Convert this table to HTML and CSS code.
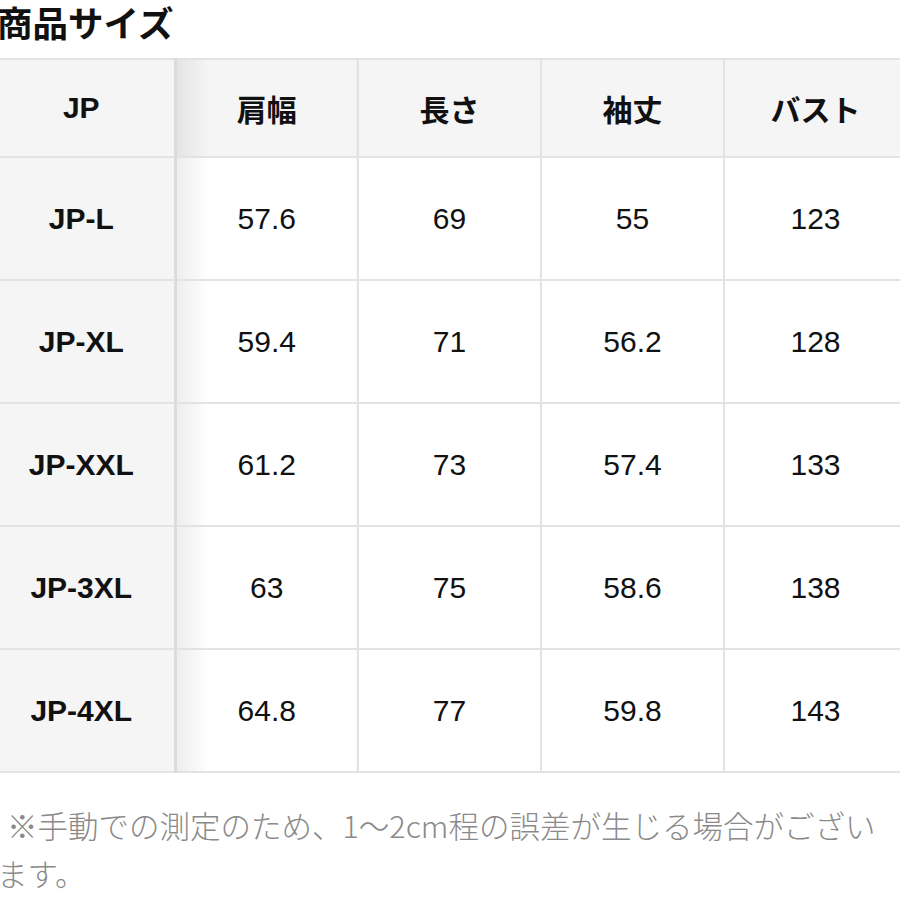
FILE: index.html
```html
<!DOCTYPE html>
<html lang="ja">
<head>
<meta charset="utf-8">
<link rel="stylesheet" href="styles.css">
</head>
<body>
<h1 class="title">商品サイズ</h1>
<table class="size-table">
  <colgroup>
    <col class="c-first"><col class="c-col"><col class="c-col"><col class="c-col"><col class="c-col">
  </colgroup>
  <thead>
    <tr><th class="first">JP</th><th class="second">肩幅</th><th>長さ</th><th>袖丈</th><th>バスト</th></tr>
  </thead>
  <tbody>
    <tr><th class="first">JP-L</th><td class="second">57.6</td><td>69</td><td>55</td><td>123</td></tr>
    <tr><th class="first">JP-XL</th><td class="second">59.4</td><td>71</td><td>56.2</td><td>128</td></tr>
    <tr><th class="first">JP-XXL</th><td class="second">61.2</td><td>73</td><td>57.4</td><td>133</td></tr>
    <tr><th class="first">JP-3XL</th><td class="second">63</td><td>75</td><td>58.6</td><td>138</td></tr>
    <tr><th class="first">JP-4XL</th><td class="second">64.8</td><td>77</td><td>59.8</td><td>143</td></tr>
  </tbody>
</table>
<p class="note">※手動での測定のため、1〜2cm程の誤差が生じる場合がございます。</p>
</body>
</html>
```
FILE: styles.css
```css
html, body {
  margin: 0;
  padding: 0;
  background: #ffffff;
  overflow: hidden;
}
body {
  width: 900px;
  height: 900px;
  font-family: "Liberation Sans", "Noto Sans CJK JP", sans-serif;
  color: #111111;
}
.title {
  margin: 0 0 0 -3px;
  font-family: "Noto Sans CJK JP", sans-serif;
  font-weight: 700;
  font-size: 35.5px;
  line-height: 44px;
  height: 44px;
  color: #111;
}
.size-table {
  margin: 14px 0 0 -11px;
  width: 915px;
  border-collapse: collapse;
  table-layout: fixed;
  border-top: 2px solid #e3e3e3;
}
.c-first { width: 186px; }
.c-col { width: 183px; }
.size-table th,
.size-table td {
  text-align: center;
  vertical-align: middle;
  padding: 0;
  border-bottom: 2px solid #e3e3e3;
  border-right: 2px solid #e3e3e3;
  font-size: 30px;
}
.size-table thead tr { height: 98px; }
.size-table tbody tr { height: 123px; }
.size-table thead th {
  background: #f5f5f5;
  font-family: "Noto Sans CJK JP", sans-serif;
  font-weight: 700;
  font-size: 30px;
  color: #111;
}
.size-table thead th.first {
  font-family: "Liberation Sans", sans-serif;
  font-size: 30px;
}
.size-table th.first {
  background: #f5f5f5;
  font-weight: 700;
  border-right: 3px solid #dcdcdc;
}
.size-table tbody th.first {
  font-family: "Liberation Sans", sans-serif;
}
.size-table td {
  font-weight: 400;
  background: #ffffff;
}
.size-table .second {
  background-image: linear-gradient(to right, rgba(0,0,0,0.07), rgba(0,0,0,0) 32px);
}
.note {
  margin: 28px 0 0 -3px;
  width: 895px;
  font-family: "Noto Sans CJK JP", sans-serif;
  font-weight: 300;
  font-size: 30.5px;
  line-height: 48px;
  color: #8a8a8a;
  text-indent: 10px;
}
```
